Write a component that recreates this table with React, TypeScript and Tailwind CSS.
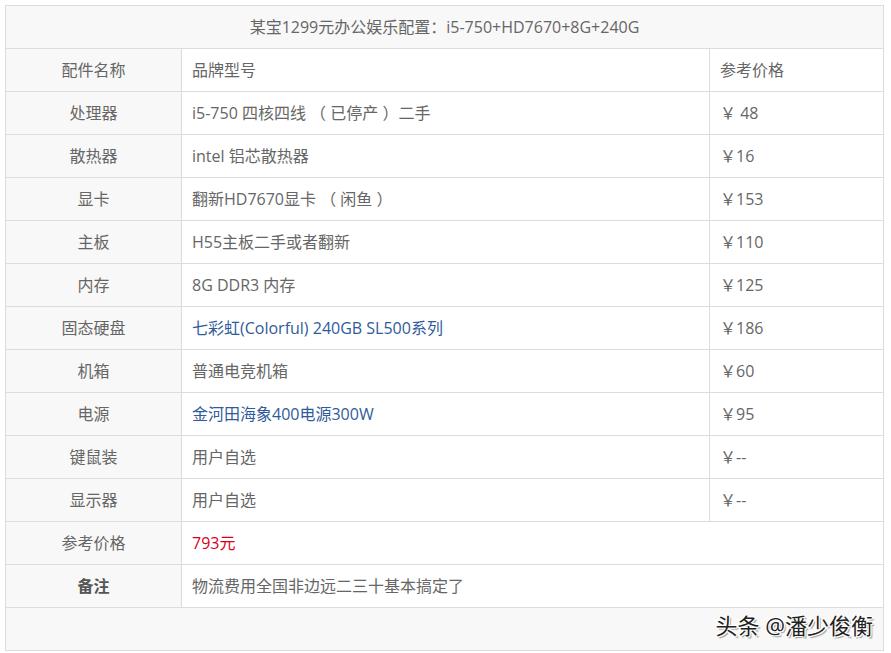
import React from 'react';

const rows = [
  { name: '处理器', model: 'i5-750 四核四线 （ 已停产 ）二手', price: '￥ 48' },
  { name: '散热器', model: 'intel 铝芯散热器', price: '￥16' },
  { name: '显卡', model: '翻新HD7670显卡 （ 闲鱼 ）', price: '￥153' },
  { name: '主板', model: 'H55主板二手或者翻新', price: '￥110' },
  { name: '内存', model: '8G DDR3 内存', price: '￥125' },
  { name: '固态硬盘', model: '七彩虹(Colorful) 240GB SL500系列', price: '￥186', link: true },
  { name: '机箱', model: '普通电竞机箱', price: '￥60' },
  { name: '电源', model: '金河田海象400电源300W', price: '￥95', link: true },
  { name: '键鼠装', model: '用户自选', price: '￥--' },
  { name: '显示器', model: '用户自选', price: '￥--' },
];

const font = { fontFamily: '"Open Sans", "Noto Sans CJK SC", sans-serif' };

const App = () => {
  return (
    <div className="w-[891px] h-[653px] bg-white pt-[5px] pl-[5px] text-[16px] text-[#666]" style={font}>
      <div className="w-[879px] border border-[#dcdcdc]">
        <div className="h-[43px] border-b border-[#dcdcdc] bg-[#f8f8f8] flex items-center justify-center">
          某宝1299元办公娱乐配置：i5-750+HD7670+8G+240G
        </div>

        <div className="h-[43px] border-b border-[#dcdcdc] flex">
          <div className="w-[176px] border-r border-[#dcdcdc] bg-[#f8f8f8] flex items-center justify-center">配件名称</div>
          <div className="w-[528px] border-r border-[#dcdcdc] flex items-center px-[10px]">品牌型号</div>
          <div className="flex-1 flex items-center px-[10px]">参考价格</div>
        </div>

        {rows.map((row, index) => (
          <div key={index} className="h-[43px] border-b border-[#dcdcdc] flex">
            <div className="w-[176px] border-r border-[#dcdcdc] bg-[#f8f8f8] flex items-center justify-center">{row.name}</div>
            <div className={`w-[528px] border-r border-[#dcdcdc] flex items-center px-[10px] ${row.link ? 'text-[#2f5b9b]' : ''}`}>
              {row.model}
            </div>
            <div className="flex-1 flex items-center px-[10px]">{row.price}</div>
          </div>
        ))}

        <div className="h-[43px] border-b border-[#dcdcdc] flex">
          <div className="w-[176px] border-r border-[#dcdcdc] bg-[#f8f8f8] flex items-center justify-center">参考价格</div>
          <div className="flex-1 flex items-center px-[10px] text-[#d8001b]">793元</div>
        </div>

        <div className="h-[43px] border-b border-[#dcdcdc] flex">
          <div className="w-[176px] border-r border-[#dcdcdc] bg-[#f8f8f8] flex items-center justify-center font-bold text-[#555]">备注</div>
          <div className="flex-1 flex items-center px-[10px]">物流费用全国非边远二三十基本搞定了</div>
        </div>

        <div className="h-[42px] bg-[#f8f8f8] relative">
          <span
            className="absolute right-[10px] top-[1px] text-[22px] text-[#222]"
            style={{ textShadow: '1px 1px 0 #fff, -1px -1px 0 #fff, 1px -1px 0 #fff, -1px 1px 0 #fff, 2px 2px 1px #999' }}
          >
            头条 @潘少俊衡
          </span>
        </div>
      </div>
    </div>
  );
};

export default App;
